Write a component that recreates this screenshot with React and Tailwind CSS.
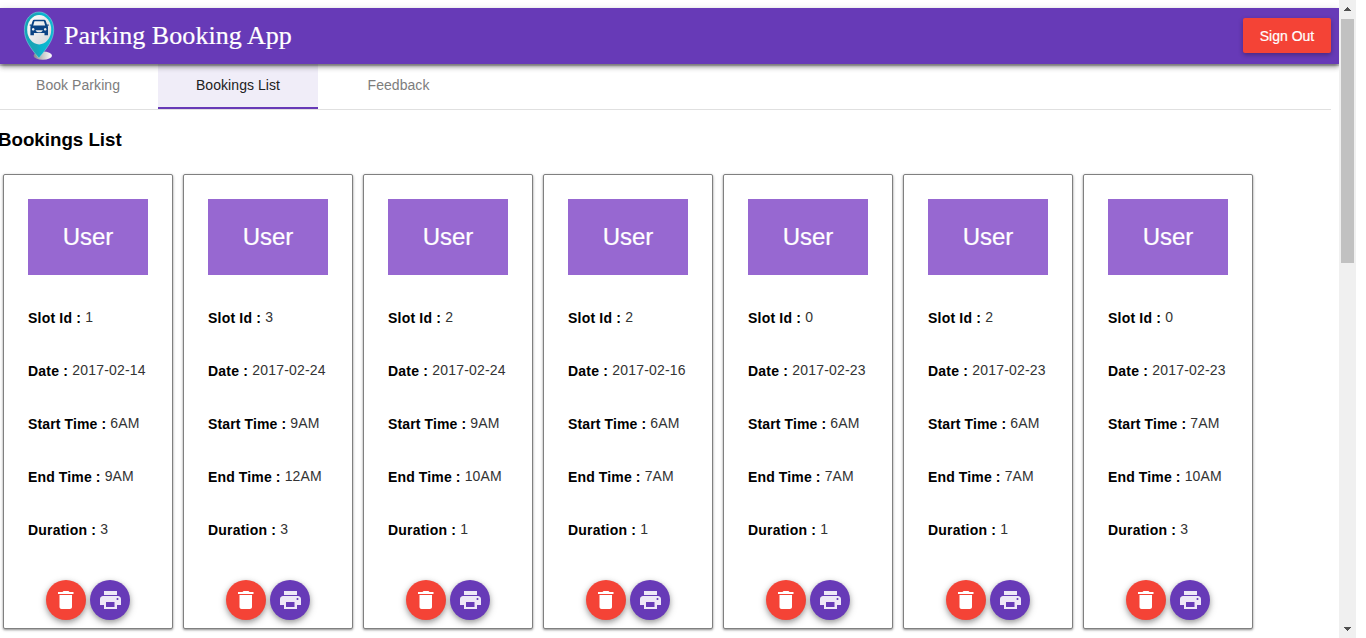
const bookings = [
  { slot: '1', date: '2017-02-14', start: '6AM', end: '9AM', duration: '3' },
  { slot: '3', date: '2017-02-24', start: '9AM', end: '12AM', duration: '3' },
  { slot: '2', date: '2017-02-24', start: '9AM', end: '10AM', duration: '1' },
  { slot: '2', date: '2017-02-16', start: '6AM', end: '7AM', duration: '1' },
  { slot: '0', date: '2017-02-23', start: '6AM', end: '7AM', duration: '1' },
  { slot: '2', date: '2017-02-23', start: '6AM', end: '7AM', duration: '1' },
  { slot: '0', date: '2017-02-23', start: '7AM', end: '10AM', duration: '3' },
];

function Logo() {
  return (
    <svg className="h-[50px] w-8 shrink-0" viewBox="0 0 32 50">
      <defs>
        <linearGradient id="pin" x1="0" x2="1" y1="0" y2="0">
          <stop offset="0" stopColor="#12a5b8" />
          <stop offset="0.4" stopColor="#1aa5b8" />
          <stop offset="0.6" stopColor="#08b4ce" />
          <stop offset="1" stopColor="#12b9d0" />
        </linearGradient>
        <linearGradient id="face" x1="0" x2="1" y1="0" y2="1">
          <stop offset="0" stopColor="#ffffff" />
          <stop offset="1" stopColor="#d3d6da" />
        </linearGradient>
        <linearGradient id="base" x1="0" x2="1" y1="0" y2="0">
          <stop offset="0" stopColor="#88888c" />
          <stop offset="0.5" stopColor="#c8c8c8" />
          <stop offset="1" stopColor="#ffffff" />
        </linearGradient>
      </defs>
      <ellipse cx="19.800" cy="44.700" rx="9.200" ry="4.100" fill="url(#base)" />
      <path d="M16 1C8 1 1.400 8.500 1.400 18.500c0 8 3 13.500 7.600 20 2.500 3.500 4.800 6 7 8.500 1.800-2.500 4.500-5.500 7-9 4.500-6.300 7.700-12 7.700-19.500C30.700 8.500 24 1 16 1Z" fill="url(#pin)" stroke="#8ed9e4" strokeWidth="0.5" />
      <ellipse cx="16.200" cy="18.700" rx="12" ry="14.700" fill="url(#face)" />
      <path transform="translate(.2 -1.200)" fillRule="evenodd" d="M11 10h10q1.200 0 1.600 1.200l1.400 4.300q.8.500.8 1.600V25.500h-3.500v-2.300H10.700v2.300H7.200V17.100q0-1.100.8-1.600l1.400-4.300Q9.800 10 11 10ZM11.300 11.500 10 15.700h12l-1.300-4.200ZM10 18.200a1.300 1.300 0 1 0 .01 0ZM22 18.200a1.300 1.300 0 1 0 .01 0ZM12.300 20.500h7.400q-1 2-2.500 2h-2.400q-1.500 0-2.500-2Z" fill="#0b4384" />
      <path d="M6.700 14.100h1.800M23.900 14.100h1.800" stroke="#0b4384" strokeWidth="1.200" />
    </svg>
  );
}

function Header() {
  return (
    <header className="relative z-10 flex h-14 items-center bg-[#673ab7] pr-2 pl-[23px] shadow-[0_2px_4px_-1px_rgba(0,0,0,0.4),0_4px_5px_0_rgba(0,0,0,0.2),0_1px_8px_0_rgba(0,0,0,0.1),0_2px_1px_0_rgba(0,0,0,0.15)]">
      <Logo />
      <h1 className="ml-[9px] font-['Liberation_Serif',serif] text-[26px] leading-8 tracking-[0.06px] text-white [-webkit-text-stroke:0.2px_white]">Parking Booking App</h1>
      <button className="mb-[2px] ml-auto h-[35px] w-[88px] rounded-[2px] bg-[#f44336] pt-px text-sm text-white shadow-[0_2px_5px_0_rgba(0,0,0,0.3)] [-webkit-text-stroke:0.2px_white]">
        Sign Out
      </button>
    </header>
  );
}

function Tabs() {
  return (
    <nav className="mr-2 flex h-[46px] border-b border-[#e0e0e0] text-sm leading-[42px] tracking-[0.06px] text-[#7d7d7d]">
      <span className="w-[158px] pr-[2px] text-center">Book Parking</span>
      <span className="h-[45px] w-40 border-b-2 border-[#673ab7] bg-[#f0edf8] text-center text-[#212121]">Bookings List</span>
      <span className="w-[161px] text-center">Feedback</span>
    </nav>
  );
}

function Field({ label, value }) {
  return (
    <p className="h-[53px] text-sm leading-5 tracking-[0.2px] whitespace-nowrap text-[#333]">
      <b className="relative top-px font-bold text-black">{label} :</b> {value}
    </p>
  );
}

function TimeField({ label, value }) {
  return (
    <p className="h-[53px] text-sm leading-5 tracking-[0.13px] whitespace-nowrap text-[#333]">
      <b className="relative top-px font-bold text-black">{label} :</b> {value}
    </p>
  );
}

const fab = 'flex size-10 items-center justify-center rounded-full shadow-[0_2px_5px_0_rgba(0,0,0,0.26),0_3px_8px_0_rgba(0,0,0,0.2)]';

function BookingCard({ booking }) {
  return (
    <article className="h-[455px] w-[170px] rounded-[2px] border border-[#808080] bg-white px-6 pt-6 shadow-[0_1px_3px_0_rgba(0,0,0,0.3),0_1px_2px_0_rgba(0,0,0,0.2)]">
      <div className="flex h-[76px] w-[120px] items-center justify-center bg-[#9768d1] text-2xl text-white [-webkit-text-stroke:0.2px_white]">User</div>
      <div className="mt-8 h-[273px]">
        <Field label="Slot Id" value={booking.slot} />
        <Field label="Date" value={booking.date} />
        <TimeField label="Start Time" value={booking.start} />
        <TimeField label="End Time" value={booking.end} />
        <Field label="Duration" value={booking.duration} />
      </div>
      <div className="flex gap-1 pl-[18px]">
        <button className={`${fab} bg-[#f44336]`}>
          <svg className="size-6" viewBox="0 0 24 24" fill="white">
            <path d="M5.500 19c0 1.100.9 2 2 2h8.500c1.100 0 2-.9 2-2V7H5.500v12zM19.500 4h-4l-1-1h-5l-1 1H4v2h15.500V4z" />
          </svg>
        </button>
        <button className={`${fab} bg-[#673ab7]`}>
          <svg className="size-6" viewBox="0 0 24 24" fill="#ede7f6">
            <path d="M20 8H5c-1.660 0-3 1.340-3 3v6h4v4h13v-4h4v-6c0-1.660-1.340-3-3-3zm-3.500 11H8v-5h8.500v5zm3-7c-.55 0-1-.45-1-1s.45-1 1-1 1 .45 1 1-.45 1-1 1zM19 3H6v4h13V3z" />
          </svg>
        </button>
      </div>
    </article>
  );
}

function Scrollbar() {
  return (
    <div className="flex w-[17px] shrink-0 flex-col items-center bg-[#f0f0f0]">
      <svg className="h-[19px] w-[17px]" viewBox="0 0 17 19" fill="#505050" shapeRendering="crispEdges">
        <path d="M8 7h1v1h1v1h1v1h1v1H5v-1h1V9h1V8h1z" />
      </svg>
      <div className="h-[244px] w-[13px] bg-[#c1c1c1]" />
      <svg className="mt-auto h-[17px] w-[17px]" viewBox="0 0 17 17" fill="#505050" shapeRendering="crispEdges">
        <path d="M5 6h7v1h-1v1h-1v1H9v1H8V9H7V8H6V7H5z" />
      </svg>
    </div>
  );
}

export default function App() {
  return (
    <div className="flex h-[638px] w-[1366px] overflow-hidden bg-white font-['Liberation_Sans',Arial,sans-serif]">
      <main className="w-[1339px] shrink-0 overflow-hidden pt-2">
        <Header />
        <Tabs />
        <h2 className="mt-[19px] -ml-[2px] h-[45px] text-[18.720px] leading-[22px] font-bold text-black">Bookings List</h2>
        <section className="flex gap-[10px] pl-[3px]">
          {bookings.map((booking, index) => (
            <BookingCard key={index} booking={booking} />
          ))}
        </section>
      </main>
      <Scrollbar />
    </div>
  );
}
